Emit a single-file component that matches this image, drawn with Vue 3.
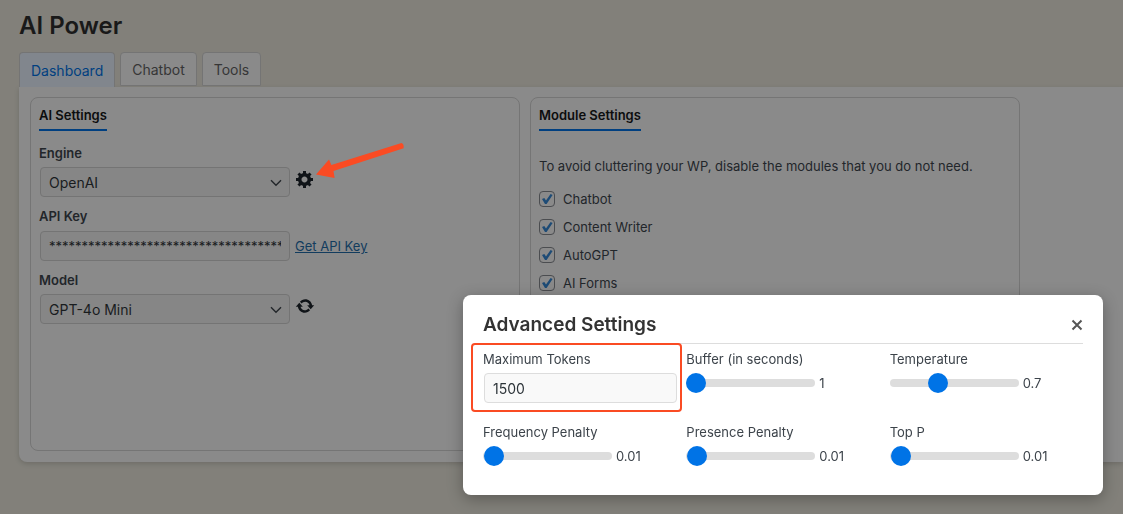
<script setup>
import { ref } from 'vue'

const tabs = ['Dashboard', 'Chatbot', 'Tools']
const activeTab = ref('Dashboard')
const engine = ref('OpenAI')
const apiKey = ref('*'.repeat(36))
const model = ref('GPT-4o Mini')
const modules = ref([
  { id: 'chatbot', name: 'Chatbot', on: true },
  { id: 'writer', name: 'Content Writer', on: true },
  { id: 'autogpt', name: 'AutoGPT', on: true },
  { id: 'forms', name: 'AI Forms', on: true },
])
const maxTokens = ref('1500')
const sliders = ref([
  { id: 'buffer', name: 'Buffer (in seconds)', value: 1, min: 1, max: 30, step: 1 },
  { id: 'temperature', name: 'Temperature', value: 0.7, min: 0, max: 2, step: 0.1 },
  { id: 'frequency', name: 'Frequency Penalty', value: 0.01, min: 0, max: 1, step: 0.01 },
  { id: 'presence', name: 'Presence Penalty', value: 0.01, min: 0, max: 1, step: 0.01 },
  { id: 'top-p', name: 'Top P', value: 0.01, min: 0, max: 1, step: 0.01 },
])
</script>

<template>
  <div class="page">
    <h1>AI Power</h1>
    <nav class="tabs">
      <button
        v-for="tab in tabs"
        :key="tab"
        type="button"
        class="tab"
        :class="{ active: tab === activeTab }"
        @click="activeTab = tab"
      >{{ tab }}</button>
    </nav>

    <main class="panel">
      <section class="card">
        <h2>AI Settings</h2>
        <div class="fields">
          <div class="field">
            <label for="engine">Engine</label>
            <div class="row">
              <span class="select">
                <select id="engine" v-model="engine"><option>OpenAI</option></select>
                <svg width="12" height="8" viewBox="0 0 12 8"><path d="M1 1.2l5 5 5-5" /></svg>
              </span>
              <button type="button" class="icon" aria-label="Advanced settings">
                <svg width="20" height="20" viewBox="0 0 20 20"><path d="M18 12h-2.18c-.17.7-.44 1.35-.81 1.93l1.54 1.54-2.1 2.1-1.54-1.54c-.58.36-1.23.63-1.91.79V19H8v-2.18c-.68-.16-1.33-.43-1.91-.79l-1.54 1.54-2.12-2.12 1.54-1.54c-.36-.58-.63-1.23-.79-1.91H1V9.03h2.17c.16-.7.44-1.35.8-1.94L2.43 5.55l2.1-2.1 1.54 1.54c.58-.37 1.24-.64 1.93-.81V2h3v2.18c.68.16 1.33.43 1.91.79l1.54-1.54 2.12 2.12-1.54 1.54c.36.59.64 1.24.8 1.94H18V12zm-8.5 1.5c1.66 0 3-1.34 3-3s-1.34-3-3-3-3 1.34-3 3 1.34 3 3 3z" /></svg>
              </button>
              <svg class="arrow" width="90" height="40" viewBox="0 0 90 40" aria-hidden="true">
                <path d="M0 34.5L13 19.5L15.4 25L85.5 3Q88.2 4 87.6 8.2L17.5 31L18.6 38Z" />
              </svg>
            </div>
          </div>
          <div class="field">
            <label for="api-key">API Key</label>
            <div class="row middle">
              <input id="api-key" v-model="apiKey" type="text" />
              <a href="#">Get API Key</a>
            </div>
          </div>
          <div class="field">
            <label for="model">Model</label>
            <div class="row">
              <span class="select">
                <select id="model" v-model="model"><option>GPT-4o Mini</option></select>
                <svg width="12" height="8" viewBox="0 0 12 8"><path d="M1 1.2l5 5 5-5" /></svg>
              </span>
              <button type="button" class="icon" aria-label="Refresh models">
                <svg width="20" height="20" viewBox="0 0 20 20"><path d="M10.2 3.28c3.53 0 6.43 2.61 6.92 6h2.08l-3.5 4-3.5-4h2.32c-.45-1.97-2.21-3.45-4.32-3.45-1.45 0-2.73.71-3.54 1.78L4.95 5.66C6.23 4.2 8.11 3.28 10.2 3.28zm-.4 13.44c-3.52 0-6.43-2.61-6.92-6H.8l3.5-4c1.17 1.33 2.33 2.67 3.5 4H5.48c.45 1.97 2.21 3.45 4.32 3.45 1.45 0 2.73-.71 3.54-1.78l1.71 1.95c-1.28 1.46-3.15 2.38-5.25 2.38z" /></svg>
              </button>
            </div>
          </div>
        </div>
      </section>

      <section class="card">
        <h2>Module Settings</h2>
        <p>To avoid cluttering your WP, disable the modules that you do not need.</p>
        <ul>
          <li v-for="m in modules" :key="m.id">
            <span class="check">
              <input :id="m.id" v-model="m.on" type="checkbox" />
              <svg v-if="m.on" width="16" height="16" viewBox="0 0 16 16"><path d="M3 8.1L5.3 6.9L7 9.4L11.6 3L13.6 4.1L7.6 13H6Z" /></svg>
            </span>
            <label :for="m.id">{{ m.name }}</label>
          </li>
        </ul>
      </section>
    </main>

    <div class="modal" role="dialog" aria-labelledby="modal-title">
      <header>
        <h2 id="modal-title">Advanced Settings</h2>
        <button type="button" aria-label="Close">
          <svg width="12" height="12" viewBox="0 0 12 12"><path d="M1.5 1.5l9 9M10.5 1.5l-9 9" /></svg>
        </button>
      </header>
      <div class="options">
        <div class="option highlighted">
          <label for="max-tokens">Maximum Tokens</label>
          <input id="max-tokens" v-model="maxTokens" type="text" />
        </div>
        <div v-for="s in sliders" :key="s.id" class="option">
          <label :for="s.id">{{ s.name }}</label>
          <div class="slide">
            <input :id="s.id" v-model.number="s.value" type="range" :min="s.min" :max="s.max" :step="s.step" />
            <output :for="s.id">{{ s.value }}</output>
          </div>
        </div>
      </div>
    </div>
  </div>
</template>

<style>
body {
  margin: 0;
  background: #82807a;
}
</style>

<style scoped>
.page {
  box-sizing: border-box;
  min-height: 100vh;
  padding: 10px 0 52px 19px;
  overflow: hidden;
  font: 13px/16px Inter, "Liberation Sans", sans-serif;
  color: #22262a;
}
* { box-sizing: border-box; }
h1, h2, p, ul { margin: 0; padding: 0; }
h1 {
  font-size: 24px;
  line-height: 32px;
  font-weight: 600;
  color: #191919;
}
button, input, select { font-family: inherit; margin: 0; }
button { padding: 0; border: 0; background: none; }
.tabs {
  display: flex;
  gap: 5px;
  height: 35px;
  margin-top: 10px;
}
.tab {
  height: 34px;
  padding: 0 11px;
  border: 1px solid #747474;
  border-radius: 4px 4px 0 0;
  background: #8a8a8a;
  font-size: 14px;
  color: #363636;
}
.tab.active {
  height: 35px;
  border-bottom: 0;
  background: #81868d;
  color: #003f80;
}
.panel {
  display: grid;
  grid-template-columns: 1fr 1fr;
  gap: 10px;
  min-height: 375px;
  padding: 10px 103px 11px 11px;
  border-radius: 0 0 0 8px;
  background: #8a8a8a;
  box-shadow: 0 2px 5px rgba(0, 0, 0, 0.15);
}
.card {
  padding: 9px 8px;
  border: 1px solid #757575;
  border-radius: 8px;
}
.card h2 {
  width: max-content;
  padding-bottom: 6px;
  border-bottom: 2px solid #003f80;
  font-size: 13px;
  line-height: 16px;
  font-weight: 600;
  color: #0c0d0e;
}
.fields {
  display: grid;
  gap: 11px;
  margin-top: 14px;
}
.field { display: grid; gap: 6px; }
.field label { font-weight: 600; }
.row {
  position: relative;
  display: flex;
  gap: 5px;
  padding-left: 1px;
}
.middle {
  align-items: center;
  padding-top: 1px;
}
.select { position: relative; }
.select svg {
  position: absolute;
  right: 8px;
  top: 12px;
  fill: none;
  stroke: #22262a;
  stroke-width: 1.4;
  pointer-events: none;
}
select, input[type="text"] {
  display: block;
  width: 250px;
  height: 30px;
  padding: 0 8px;
  border: 1px solid #747474;
  border-radius: 4px;
  background: #868686;
  font-size: 14px;
  color: #191c1e;
  appearance: none;
}
.middle input[type="text"] { font-size: 13px; }
.icon { width: 20px; height: 24px; fill: #101418; }
.icon svg { display: block; }
.arrow {
  position: absolute;
  left: 277px;
  top: -27px;
  fill: #fa4b23;
}
a { color: #123c5e; }
.card p { margin-top: 27px; color: #22262a; }
ul {
  display: grid;
  gap: 12px;
  margin-top: 17px;
  list-style: none;
}
li {
  display: flex;
  align-items: center;
  gap: 8px;
}
.check { position: relative; width: 16px; height: 16px; }
.check input {
  display: block;
  width: 16px;
  height: 16px;
  border: 1px solid #4b4d50;
  border-radius: 4px;
  background: #8a8a8a;
  appearance: none;
}
.check svg {
  position: absolute;
  left: 0;
  top: 0;
  fill: #1d4b76;
  pointer-events: none;
}
.modal {
  position: fixed;
  right: 20px;
  bottom: 19px;
  width: 640px;
  max-width: calc(100% - 40px);
  min-height: 200px;
  padding: 16px 20px 27px;
  border-radius: 8px;
  background: #fff;
  box-shadow: 0 4px 16px rgba(0, 0, 0, 0.3);
  color: #3c434a;
}
.modal header {
  display: flex;
  align-items: center;
  justify-content: space-between;
  height: 33px;
  padding-bottom: 5px;
  border-bottom: 1px solid #ddd;
}
.modal h2 {
  font-size: 19px;
  line-height: 26px;
  font-weight: 600;
  color: #333;
}
.modal header svg {
  display: block;
  fill: none;
  stroke: #555;
  stroke-width: 2;
}
.options {
  display: grid;
  grid-template-columns: repeat(3, 1fr);
  gap: 21px 10px;
  margin-top: 7px;
}
.option {
  position: relative;
  display: grid;
  align-content: start;
  gap: 6px;
}
.option input[type="text"] {
  width: 100%;
  border-color: #ddd;
  background: #f9f9f9;
  color: #2c3338;
  margin-left: 1px;
}
.highlighted::after {
  content: "";
  position: absolute;
  inset: -8px -6px -9px -12px;
  border: 2px solid #fa4b23;
  border-radius: 4px;
  pointer-events: none;
}
.slide {
  display: flex;
  align-items: center;
  gap: 4px;
  height: 20px;
}
.slide input {
  width: 129px;
  height: 8px;
  border-radius: 4px;
  background: #ddd;
  appearance: none;
}
.slide input::-webkit-slider-thumb {
  width: 20px;
  height: 20px;
  border-radius: 50%;
  background: #0073e6;
  appearance: none;
}
</style>
